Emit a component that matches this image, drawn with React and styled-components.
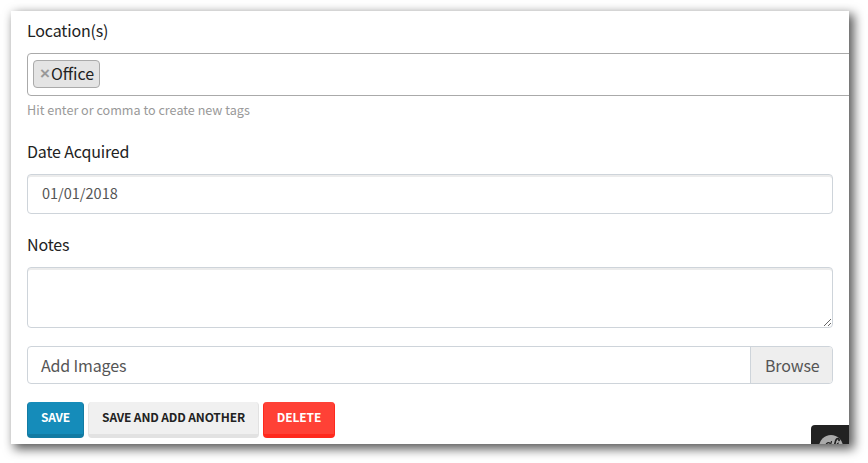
import React from 'react';
import styled, { createGlobalStyle } from 'styled-components';

const GlobalStyle = createGlobalStyle`
  *, *::before, *::after { box-sizing: border-box; }
  body {
    margin: 0;
    background: #fff;
    color: #222;
    font-family: "Noto Sans CJK SC", "Open Sans", sans-serif;
    overflow: hidden;
  }
  input, textarea, button { font-family: inherit; margin: 0; }
`;

const Page = styled.main`
  height: 463px;
  padding: 11px 19px 19px 11px;
`;

const Panel = styled.form`
  position: relative;
  height: 433px;
  padding: 7px 16px 0;
  overflow: hidden;
  background: #fff;
`;

const Shadow = styled.div`
  box-shadow: 4px 4px 10px 1px rgba(0, 0, 0, 0.65);
`;

const Label = styled.label`
  display: block;
  height: 24px;
  margin-bottom: 11px;
  font-size: 16px;
  letter-spacing: -0.16px;
  line-height: 24px;
`;

const TagSelect = styled.div`
  display: flex;
  align-items: flex-start;
  width: 840px;
  height: 43px;
  padding: 6px 5px;
  border: 1px solid #aaa;
  border-radius: 4px;
`;

const Tag = styled.span`
  display: flex;
  width: 67px;
  height: 28px;
  padding: 0 0 0 6px;
  border: 1px solid #aaa;
  border-radius: 4px;
  background: #e4e4e4;
  font-size: 16px;
  line-height: 24px;
`;

const RemoveMark = styled.span`
  width: 11px;
  color: #999;
  font-family: "Liberation Sans", sans-serif;
  font-size: 17px;
  font-weight: 700;
  line-height: 26px;
`;

const Hint = styled.small`
  display: block;
  height: 20px;
  margin: 4px 0 19px;
  color: #999;
  font-size: 12.6px;
  line-height: 20px;
`;

const fieldStyles = `
  display: block;
  width: 100%;
  border: 1px solid #ced4da;
  border-radius: 4px;
  background: #fff;
  box-shadow: inset 0 2px 0 rgba(0, 0, 0, 0.075);
  color: #555;
  outline: none;
`;

const TextField = styled.input`
  ${fieldStyles}
  height: 40px;
  margin-bottom: 18px;
  padding: 0 14px 4px;
  font-size: 14.5px;
`;

const NotesField = styled.textarea`
  ${fieldStyles}
  height: 61px;
  margin-bottom: 18px;
  resize: vertical;
`;

const FilePicker = styled.div`
  display: flex;
  height: 38px;
  margin-bottom: 18px;
  overflow: hidden;
  border: 1px solid #ced4da;
  border-radius: 4px;
  color: #555;
  font-size: 16px;
  letter-spacing: -0.15px;
  line-height: 37px;
`;

const FileName = styled.span`
  flex: 1;
  padding-left: 13px;
`;

const Browse = styled.span`
  width: 82px;
  padding-left: 14px;
  border-left: 1px solid #ced4da;
  background: #eee;
`;

const Actions = styled.div`
  display: flex;
  gap: 4px;
`;

const tones = {
  primary: { bg: '#158cba', edge: '#127ba3', fg: '#fff', width: 57 },
  plain: { bg: '#f0f0f0', edge: '#e2e2e2', fg: '#222', width: 171 },
  danger: { bg: '#ff4136', edge: '#ff291d', fg: '#fff', width: 72 },
};

const Button = styled.button`
  width: ${(p) => tones[p.$tone].width}px;
  height: 36px;
  padding: 0 0 2px;
  border: 1px solid ${(p) => tones[p.$tone].edge};
  border-width: 0 1px 4px;
  border-radius: 4px;
  background: ${(p) => tones[p.$tone].bg};
  color: ${(p) => tones[p.$tone].fg};
  font-size: 12px;
  font-weight: 700;
  letter-spacing: -0.14px;
  line-height: 30px;
  white-space: nowrap;
`;

const DebugHandle = styled.div`
  position: absolute;
  right: 0;
  bottom: 0;
  width: 38px;
  height: 19px;
  border-radius: 4px 0 0;
  background: #222;
  overflow: hidden;

  svg { display: block; }
`;

export default function App() {
  return (
    <Page>
      <GlobalStyle />
      <Shadow>
        <Panel>
          <Label>Location(s)</Label>
          <TagSelect>
            <Tag><RemoveMark>×</RemoveMark>Office</Tag>
          </TagSelect>
          <Hint>Hit enter or comma to create new tags</Hint>
          <Label htmlFor="acquired">Date Acquired</Label>
          <TextField id="acquired" defaultValue="01/01/2018" />
          <Label htmlFor="notes">Notes</Label>
          <NotesField id="notes" />
          <FilePicker>
            <FileName>Add Images</FileName>
            <Browse>Browse</Browse>
          </FilePicker>
          <Actions>
            <Button type="button" $tone="primary">SAVE</Button>
            <Button type="button" $tone="plain">SAVE AND ADD ANOTHER</Button>
            <Button type="button" $tone="danger">DELETE</Button>
          </Actions>
          <DebugHandle>
            <svg width="38" height="19" viewBox="0 0 38 19" aria-hidden="true">
              <circle cx="20" cy="22" r="12" fill="#aaa" />
              <g fill="none" stroke="#222" strokeLinecap="round">
                <path d="M19 18.2c-1.5-1.2-3.5-.5-4 1.800" strokeWidth="1.3" />
                <path d="M20.500 16.500c-.5 1.500-.8 2.500-1 3.500" strokeWidth="1.2" />
                <path d="M28 15.500c.5-1.800-1-2.500-2.300-1.500-1.700 1.500-1.700 4-2.200 7" strokeWidth="1.7" />
                <path d="M27.500 18c-1 0-1.500 1-1.500 2" strokeWidth="1.1" />
              </g>
            </svg>
          </DebugHandle>
        </Panel>
      </Shadow>
    </Page>
  );
}
